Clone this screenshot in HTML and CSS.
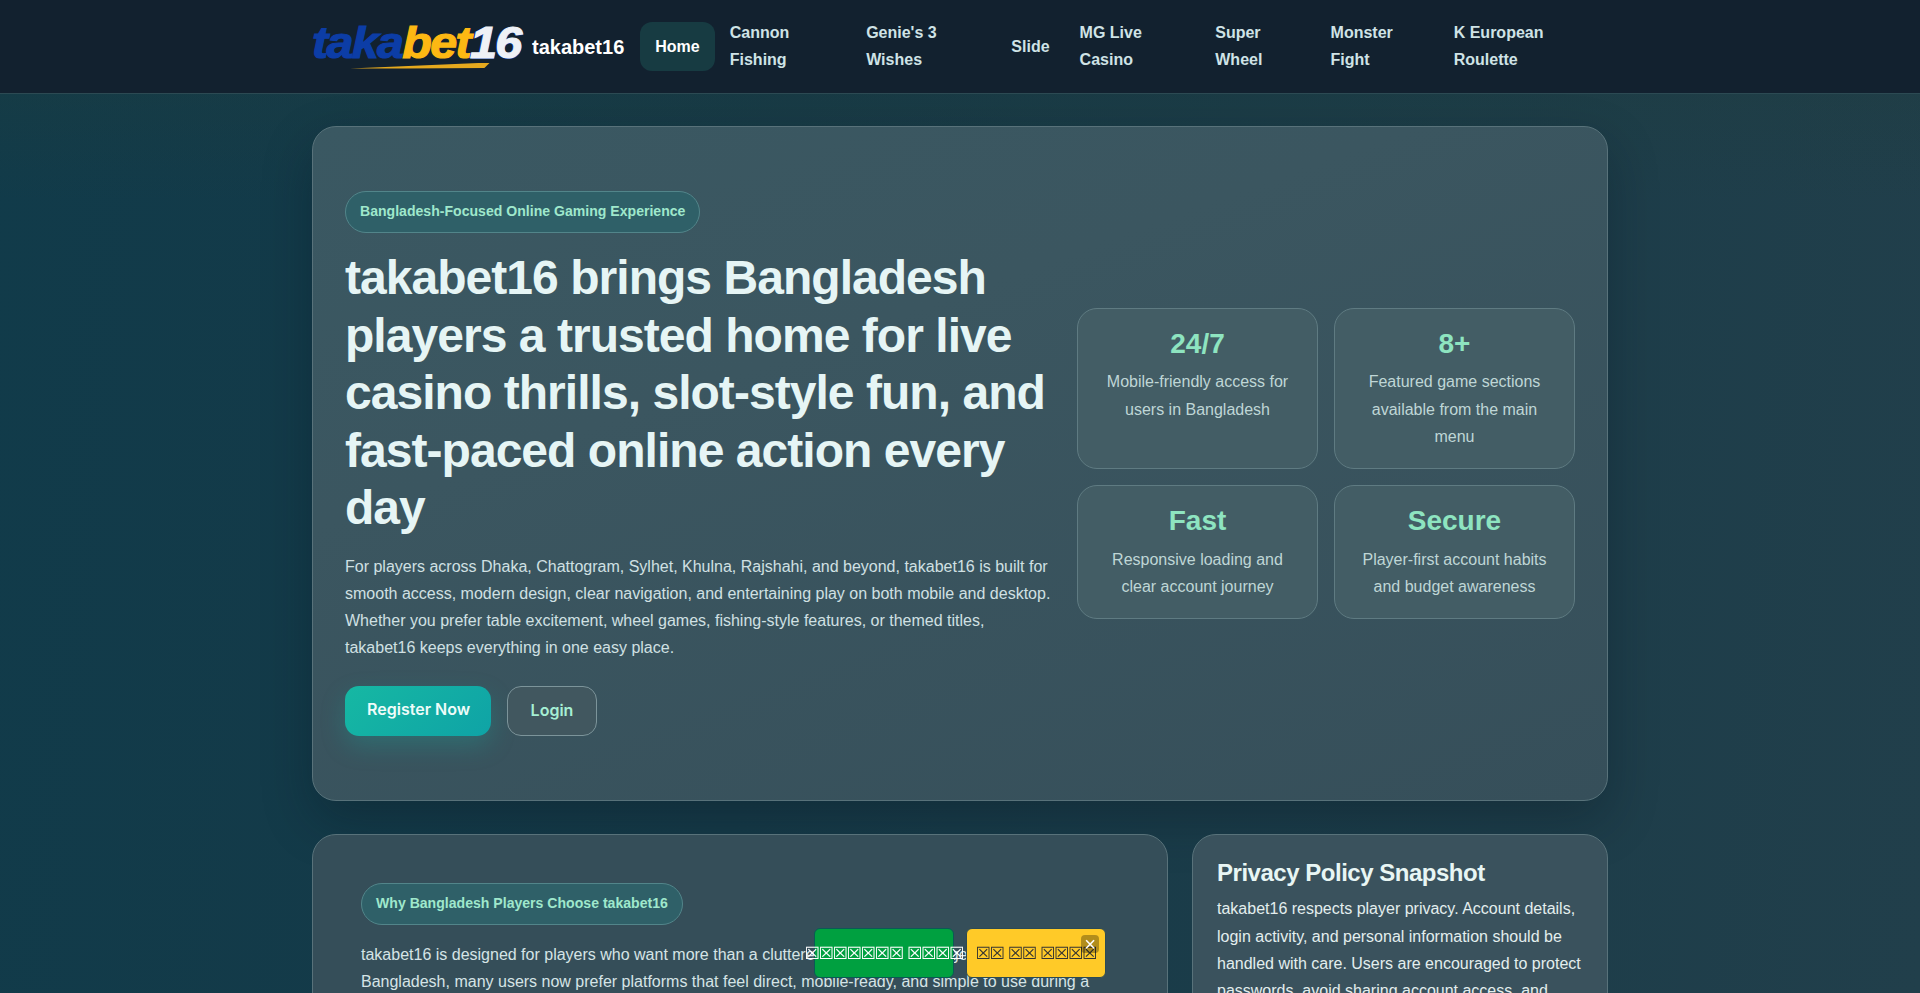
FILE: index.html
```html
<!DOCTYPE html>
<html lang="en">

  <head>
    <meta charset="utf-8">
    <title>takabet16</title>
    <link rel="stylesheet" href="styles.css">
  </head>

  <body>
    <header class="site-header">
      <div class="header-inner">
        <a class="brand" href="#">
          <span class="logo">
            <span class="logo-words"><span class="logo-blue">taka</span><span class="logo-gold">bet</span><span class="logo-white">16</span></span>
            <span class="logo-swoosh"></span>
          </span>
          <span class="brand-name">takabet16</span>
        </a>
        <nav class="main-nav">
          <a class="nav-link nav-active" href="#">Home</a>
          <a class="nav-link" href="#">Cannon Fishing</a>
          <a class="nav-link" href="#">Genie's 3 Wishes</a>
          <a class="nav-link" href="#">Slide</a>
          <a class="nav-link" href="#">MG Live Casino</a>
          <a class="nav-link" href="#">Super Wheel</a>
          <a class="nav-link" href="#">Monster Fight</a>
          <a class="nav-link" href="#">K European Roulette</a>
        </nav>
      </div>
    </header>

    <main class="page">
      <section class="hero">
        <div class="hero-copy">
          <span class="pill">Bangladesh-Focused Online Gaming Experience</span>
          <h1 class="hero-title">takabet16 brings Bangladesh players a trusted home for live casino thrills, slot-style fun, and fast-paced online action every day</h1>
          <p class="hero-text">For players across Dhaka, Chattogram, Sylhet, Khulna, Rajshahi, and beyond, takabet16 is built for smooth access, modern design, clear navigation, and entertaining play on both mobile and desktop. Whether you prefer table excitement, wheel games, fishing-style features, or themed titles, takabet16 keeps everything in one easy place.</p>
          <div class="hero-buttons">
            <a class="btn btn-primary" href="#">Register Now</a>
            <a class="btn btn-ghost" href="#">Login</a>
          </div>
        </div>
        <div class="stats">
          <div class="stat-card">
            <h3 class="stat-value">24/7</h3>
            <p class="stat-text">Mobile-friendly access for users in Bangladesh</p>
          </div>
          <div class="stat-card">
            <h3 class="stat-value">8+</h3>
            <p class="stat-text">Featured game sections available from the main menu</p>
          </div>
          <div class="stat-card">
            <h3 class="stat-value">Fast</h3>
            <p class="stat-text">Responsive loading and clear account journey</p>
          </div>
          <div class="stat-card">
            <h3 class="stat-value">Secure</h3>
            <p class="stat-text">Player-first account habits and budget awareness</p>
          </div>
        </div>
      </section>

      <section class="lower-row">
        <article class="why-card">
          <span class="pill">Why Bangladesh Players Choose takabet16</span>
          <p class="why-text">takabet16 is designed for players who want more than a cluttered online gaming page. Across Bangladesh, many users now prefer platforms that feel direct, mobile-ready, and simple to use during a quick break or a long evening session.</p>
        </article>
        <aside class="side-card">
          <h2 class="side-title">Privacy Policy Snapshot</h2>
          <p class="side-text">takabet16 respects player privacy. Account details, login activity, and personal information should be handled with care. Users are encouraged to protect passwords, avoid sharing account access, and review settings regularly.</p>
        </aside>
      </section>
    </main>

    <!-- the reference shows crossed boxes where its font has no glyph -->
    <div class="float-bar">
      <a class="float-btn float-green" href="#" aria-label="নিবন্ধন করুন">☒☒☒☒☒☒☒ ☒☒☒☒</a>
      <a class="float-btn float-yellow" href="#" aria-label="লগ ইন করুন">☒☒ ☒☒ ☒☒☒☒</a>
      <button class="float-close">×</button>
    </div>
  </body>

</html>
```

FILE: styles.css
```css
*{
  box-sizing: border-box;
}

html{
  height: 100%;
  overflow: hidden;
}

body{
  margin: 0;
  height: 100%;
  overflow: hidden;
  color: #e3f1f1;
  font-family: "Liberation Sans", Arial, sans-serif;
  font-size: 16px;
  line-height: 1.7;
  background-color: #12333f;
  background-image:
    linear-gradient(180deg, rgba(30, 60, 62, 0.6) 0, rgba(30, 60, 62, 0) 200px),
    linear-gradient(95deg, #113b4a 0, #163a48 40%, #213f4b 100%);
}

a{
  text-decoration: none;
  color: inherit;
}

/* header */
.site-header{
  height: 94px;
  background: #12212f;
  border-bottom: 1px solid #2c4a53;
}

.header-inner{
  width: 1296px;
  height: 93px;
  margin: 0 auto;
  display: flex;
  align-items: center;
  gap: 16px;
}

.brand{
  display: flex;
  align-items: center;
  gap: 10px;
  flex-shrink: 0;
}

.logo{
  display: block;
  position: relative;
  width: 210px;
  height: 44px;
}

.logo-words{
  display: block;
  font-size: 44px;
  line-height: 36px;
  font-weight: bold;
  font-style: italic;
  letter-spacing: -1.5px;
  white-space: nowrap;
  transform: scaleX(1.1);
  transform-origin: left center;
}

.logo-blue{
  color: #0c3da6;
  -webkit-text-stroke: 1.2px #0c3da6;
}

.logo-gold{
  color: #fdb813;
  -webkit-text-stroke: 1.2px #fdb813;
}

.logo-white{
  color: #eef1f6;
  -webkit-text-stroke: 1.2px #eef1f6;
  text-shadow: 1px 1px 0 #0c3da6, -1px 0 0 #0c3da6;
}

.logo-swoosh{
  position: absolute;
  left: 38px;
  bottom: 0;
  width: 140px;
  height: 6px;
  background: #e5a91e;
  clip-path: polygon(0 100%, 100% 0, 96% 90%, 40% 100%);
}

.brand-name{
  font-size: 20px;
  font-weight: bold;
  color: #fff;
}

.main-nav{
  flex: 1;
  min-width: 0;
  display: flex;
  align-items: center;
}

.nav-link{
  padding: 10.5px 15px 11.5px;
  border-radius: 12px;
  font-weight: bold;
  line-height: 27px;
  color: #cfe3e6;
}

.nav-active{
  padding: 11px 15px;
  color: #fff;
  background: #173b42;
}

/* main */
.page{
  width: 1296px;
  margin: 0 auto;
  padding-top: 32px;
}

.hero{
  display: grid;
  grid-template-columns: 1fr 498px;
  gap: 24px;
  align-items: center;
  padding: 64px 32px;
  border: 1px solid #58727a;
  border-radius: 24px;
  background: linear-gradient(160deg, #3a5862, #3b5660 35%, #364f5a);
  box-shadow: 0 20px 50px rgba(5, 20, 30, 0.3);
}

.pill{
  display: inline-block;
  vertical-align: top;
  padding: 8px 14px;
  border: 1px solid #52858a;
  border-radius: 999px;
  background: #2f6068;
  color: #9fe8cc;
  font-size: 14.08px;
  font-weight: bold;
}

.hero-title{
  margin: 16px 0;
  font-size: 48px;
  line-height: 1.2;
  color: #e6f5f5;
  letter-spacing: -0.02em;
}

.hero-text{
  margin: 0 0 24px;
  color: #d0e0e3;
}

.hero-buttons{
  display: flex;
  gap: 16px;
}

.btn{
  height: 50px;
  padding: 0 22.5px;
  border-radius: 14px;
  display: flex;
  align-items: center;
  font-family: Inter, sans-serif;
  font-weight: 600;
}

.btn-primary{
  padding: 0 21px 2px 22px;
  color: #eefcf9;
  background: linear-gradient(135deg, #16b8a3, #0fa3a6);
  box-shadow: 0 10px 24px rgba(20, 184, 166, 0.25);
}

.btn-ghost{
  color: #a6efd4;
  border: 1px solid #7c949a;
  background: #41575f;
}

.stats{
  display: grid;
  grid-template-columns: 1fr 1fr;
  gap: 16px;
}

.stat-card{
  padding: 18px;
  border: 1px solid #5f7b82;
  border-radius: 20px;
  background: #435d65;
  text-align: center;
}

.stat-value{
  margin: 0 0 8px;
  font-size: 28px;
  line-height: 1.2;
  color: #8ee4c0;
}

.stat-text{
  margin: 0;
  color: #bfd6d6;
}

.lower-row{
  display: grid;
  grid-template-columns: 856px 416px;
  gap: 24px;
  margin-top: 33px;
}

.why-card{
  padding: 48px 56px 48px 48px;
  border: 1px solid #58727a;
  border-radius: 24px;
  background: #354e59;
}

.why-text{
  margin: 16px 0 0;
  color: #d5e4e6;
}

.side-card{
  padding: 24px;
  border: 1px solid #58727a;
  border-radius: 24px;
  background: #3a525d;
}

.side-title{
  margin: 0 0 8px;
  font-size: 24px;
  line-height: 1.2;
  color: #e8f6f4;
  letter-spacing: -0.02em;
}

.side-text{
  margin: 0;
  color: #e3eeee;
}

/* floating buttons */
.float-bar{
  position: fixed;
  left: 814px;
  top: 928px;
  display: flex;
  gap: 12px;
}

.float-btn{
  width: 140px;
  height: 50px;
  border-radius: 6px;
  display: flex;
  align-items: center;
  justify-content: center;
  white-space: nowrap;
  font-family: "DejaVu Sans", sans-serif;
  font-size: 17px;
  letter-spacing: -1.2px;
}

.float-green{
  color: #fff;
  background: #00a040;
  border: 1px solid #0a5a55;
}

.float-yellow{
  color: #333;
  background: #ffca28;
  border: 1px solid #2c4a53;
}

.float-close{
  position: absolute;
  right: 7px;
  top: 7px;
  width: 18px;
  height: 18px;
  padding: 0;
  border: none;
  border-radius: 4px;
  background: rgba(0, 0, 0, 0.3);
  color: #fff;
  font-family: "Liberation Sans", sans-serif;
  font-size: 20px;
  font-weight: normal;
  line-height: 18px;
}
```
